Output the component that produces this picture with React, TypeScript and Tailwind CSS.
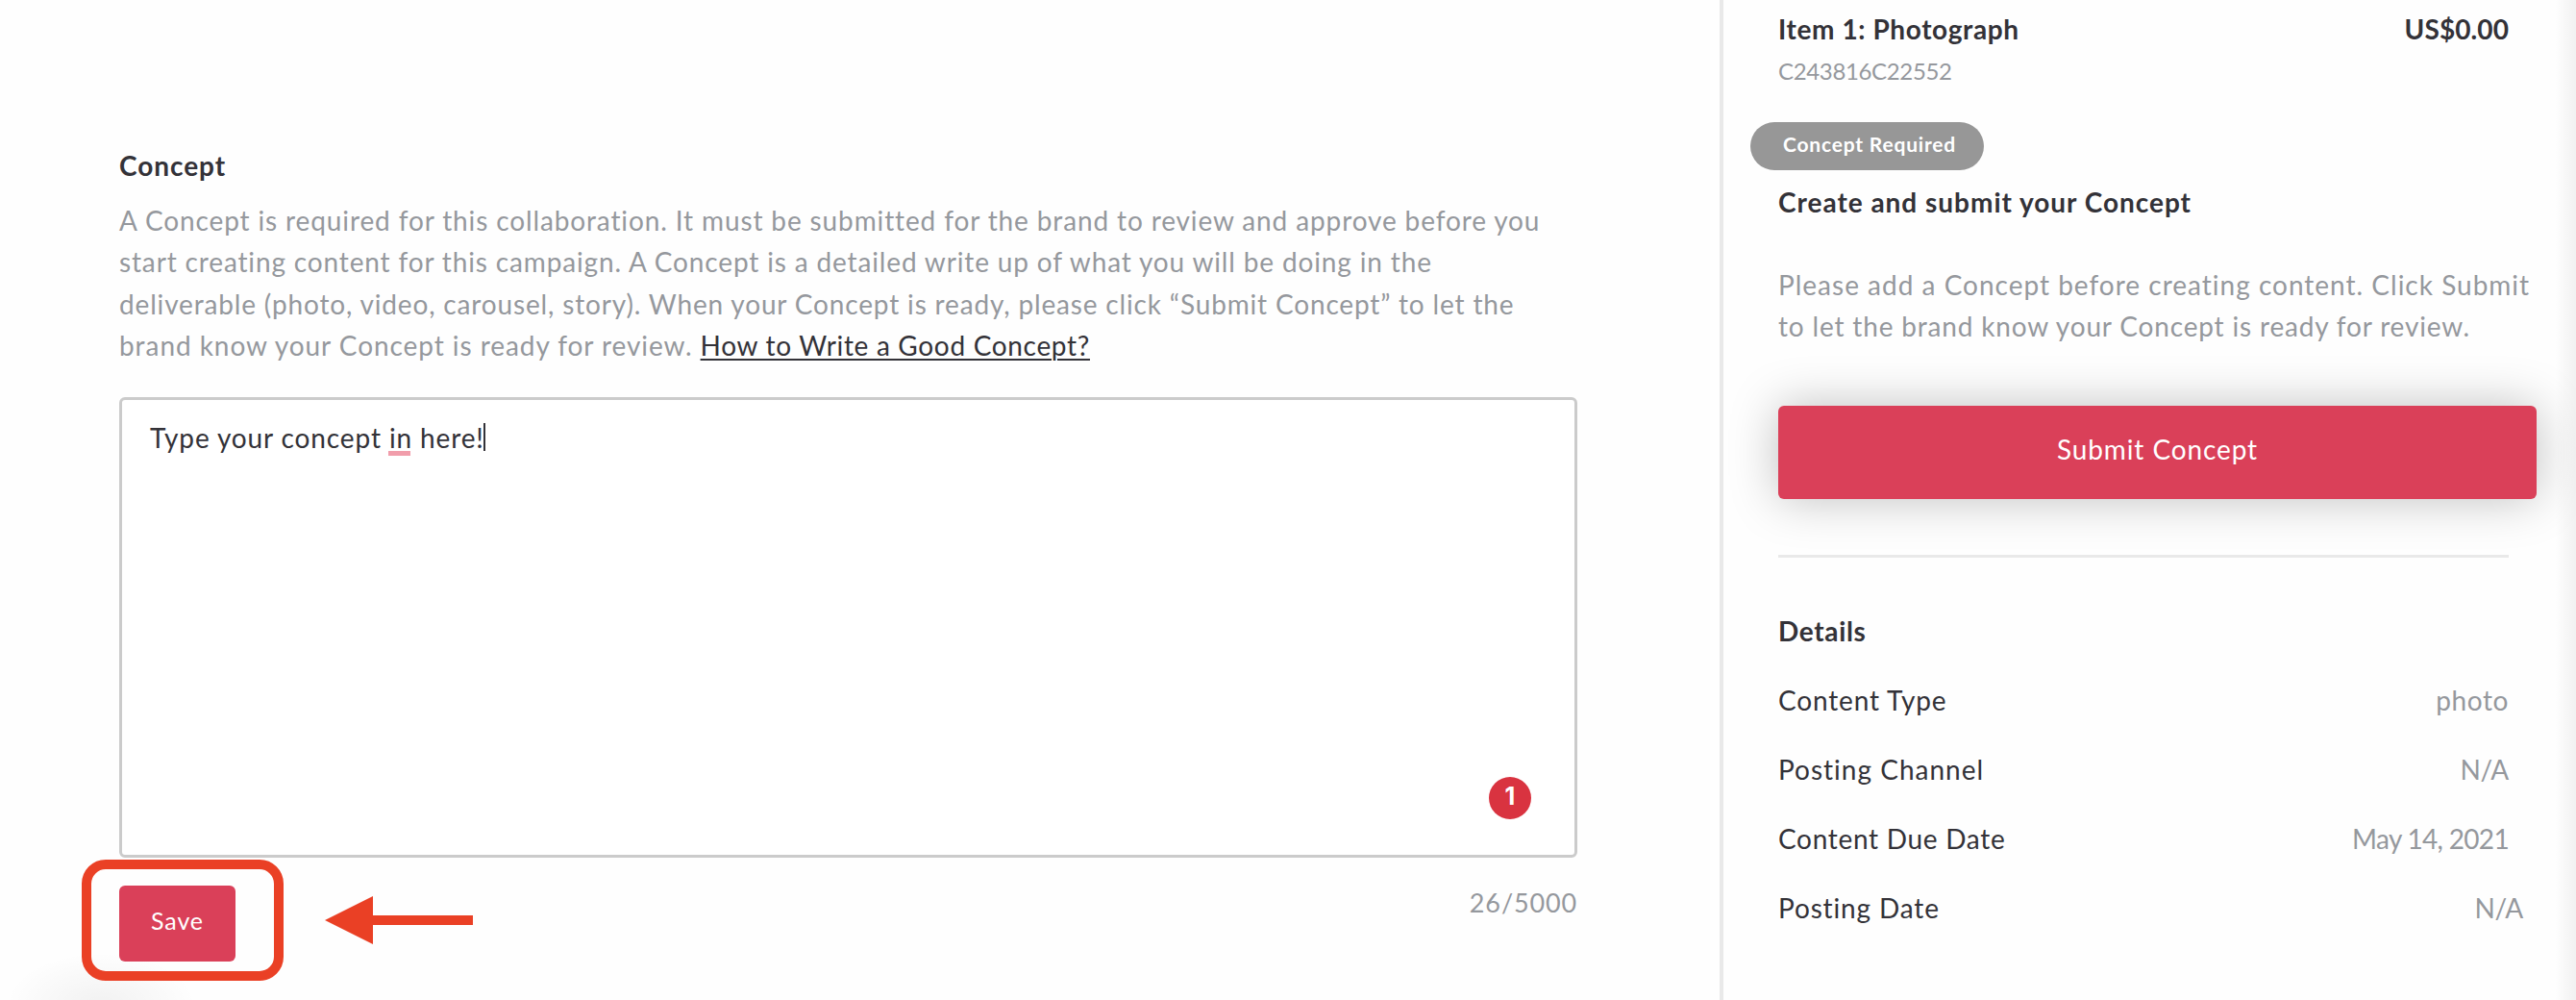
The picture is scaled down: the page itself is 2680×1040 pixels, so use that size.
import { useState } from 'react';
import clsx from 'clsx';

interface DetailRow {
  label: string;
  value: string;
  labelClass: string;
  valueClass: string;
}

const details: DetailRow[] = [
  { label: 'Content Type', value: 'photo', labelClass: 'tracking-[0.85px]', valueClass: 'tracking-[0.6px]' },
  { label: 'Posting Channel', value: 'N/A', labelClass: 'tracking-[1px]', valueClass: 'tracking-[-0.3px]' },
  { label: 'Content Due Date', value: 'May 14, 2021', labelClass: 'tracking-[0.7px]', valueClass: 'tracking-[-0.68px]' },
  { label: 'Posting Date', value: 'N/A', labelClass: 'tracking-[0.85px]', valueClass: '-mr-[15px] tracking-[-0.3px]' },
];

function ConceptEditor() {
  const [count] = useState(26);

  return (
    <main className="relative w-[1789px] shrink-0 pl-[124px] pt-[150px]">
      <h2 className="text-[28px] font-bold leading-[44px] tracking-[0.95px] text-[#333238]">Concept</h2>

      <div className="mt-[14px] h-[172px] whitespace-nowrap text-[28px] leading-[43.4px] text-[#95989d]">
        <p className="tracking-[0.875px]">
          A Concept is required for this collaboration. It must be submitted for the brand to review and approve before you
        </p>
        <p className="tracking-[0.85px]">
          start creating content for this campaign. A Concept is a detailed write up of what you will be doing in the
        </p>
        <p className="tracking-[0.84px]">
          deliverable (photo, video, carousel, story). When your Concept is ready, please click “Submit Concept” to let the
        </p>
        <p className="tracking-[0.94px]">
          brand know your Concept is ready for review.{' '}
          <a className="tracking-[0.68px] text-[#333238] underline decoration-2 underline-offset-[3px]">
            How to Write a Good Concept?
          </a>
        </p>
      </div>

      {/* Text box */}
      <div className="relative mt-[33px] h-[479px] w-[1517px] rounded-[6px] border-[3px] border-[#cbcbcb] bg-white pl-[29px] pt-[17px]">
        <div className="flex items-center whitespace-pre text-[28px] leading-[44px] tracking-[0.88px] text-[#333238]">
          <span>Type your concept </span>
          <span className="relative">
            in
            <span className="absolute -left-px bottom-[3px] h-[5px] w-[23px] bg-[#f19dab]" />
          </span>
          <span> here!</span>
          <span className="-ml-px mb-px h-[29px] w-[2px] bg-[#333238]" />
        </div>
        <span className="absolute bottom-[37px] right-[45px] flex size-[44px] items-center justify-center rounded-full bg-[#d93340] pb-[2px] font-['Inter'] text-[25px] font-bold text-white">
          1
        </span>
      </div>

      <div className="mt-[27px] flex w-[1517px] items-start">
        <div className="relative mt-[2px]">
          <button className="flex h-[79px] w-[121px] items-center justify-center rounded-[6px] bg-[#da4059] pb-[6px] text-[25px] tracking-[0.9px] text-white">
            Save
          </button>
          {/* Highlight ring around the button */}
          <div className="absolute -left-[39px] -top-[27px] h-[126px] w-[210px] rounded-[25px] border-[10px] border-[#ea4025]" />
        </div>
        <svg className="ml-[93px] mt-[13px]" width="154" height="50" viewBox="0 0 154 50" fill="#ea4025">
          <path d="M0 25 50 0v20h104v10H50v20z" />
        </svg>
        <span className="ml-auto text-[27px] leading-[40px] tracking-[0.85px] text-[#95989d]">{count}/5000</span>
      </div>
    </main>
  );
}

function Sidebar() {
  return (
    <aside className="w-[891px] shrink-0 whitespace-nowrap border-l-4 border-[#e9e9e9] pl-[57px] pr-[70px] pt-[12px] text-[28px] text-[#333238]">
      <div className="flex justify-between font-bold leading-[36px]">
        <span className="tracking-[0.6px]">Item 1: Photograph</span>
        <span className="tracking-[0.1px]">US$0.00</span>
      </div>
      <p className="mt-[8px] text-[24px] leading-[36px] tracking-[-0.35px] text-[#95989d]">C243816C22552</p>

      <div className="-ml-[29px] mt-[35px] flex h-[50px] w-[243px] items-center rounded-full bg-[#979797] pb-[5px] pl-[34px] text-[21px] font-bold tracking-[0.8px] text-white">
        Concept Required
      </div>

      <h3 className="mt-[11px] font-bold leading-[44px] tracking-[0.98px]">Create and submit your Concept</h3>

      <div className="mt-[43px] leading-[43px] text-[#95989d]">
        <p className="tracking-[1px]">Please add a Concept before creating content. Click Submit</p>
        <p className="tracking-[0.83px]">to let the brand know your Concept is ready for review.</p>
      </div>

      <button className="mt-[61px] flex h-[97px] w-[789px] items-center justify-center rounded-[6px] bg-[#da4059] pb-[7px] tracking-[0.9px] text-white shadow-[0_0_50px_rgba(0,0,0,0.25)]">
        Submit Concept
      </button>

      <hr className="mt-[58px] border-t-[3px] border-[#e9e9e9]" />

      <h3 className="mt-[54px] font-bold leading-[44px] tracking-[0.65px]">Details</h3>
      <dl className="mt-[14px]">
        {details.map((row) => (
          <div key={row.label} className="flex h-[72px] items-center justify-between">
            <dt className={row.labelClass}>{row.label}</dt>
            <dd className={clsx('text-[#95989d]', row.valueClass)}>{row.value}</dd>
          </div>
        ))}
      </dl>
    </aside>
  );
}

export default function App() {
  return (
    <div className="relative flex h-[1040px] w-[2680px] overflow-hidden bg-[#fefefe] font-['Lato',sans-serif]">
      {/* Soft shadow rising from the bottom left corner */}
      <div className="absolute -bottom-[60px] left-[5px] h-[110px] w-[200px] bg-radial from-black/5 to-transparent to-70%" />
      <ConceptEditor />
      <Sidebar />
      <div className="absolute inset-y-0 right-0 w-[22px] bg-linear-to-l from-black/5 to-transparent" />
    </div>
  );
}
